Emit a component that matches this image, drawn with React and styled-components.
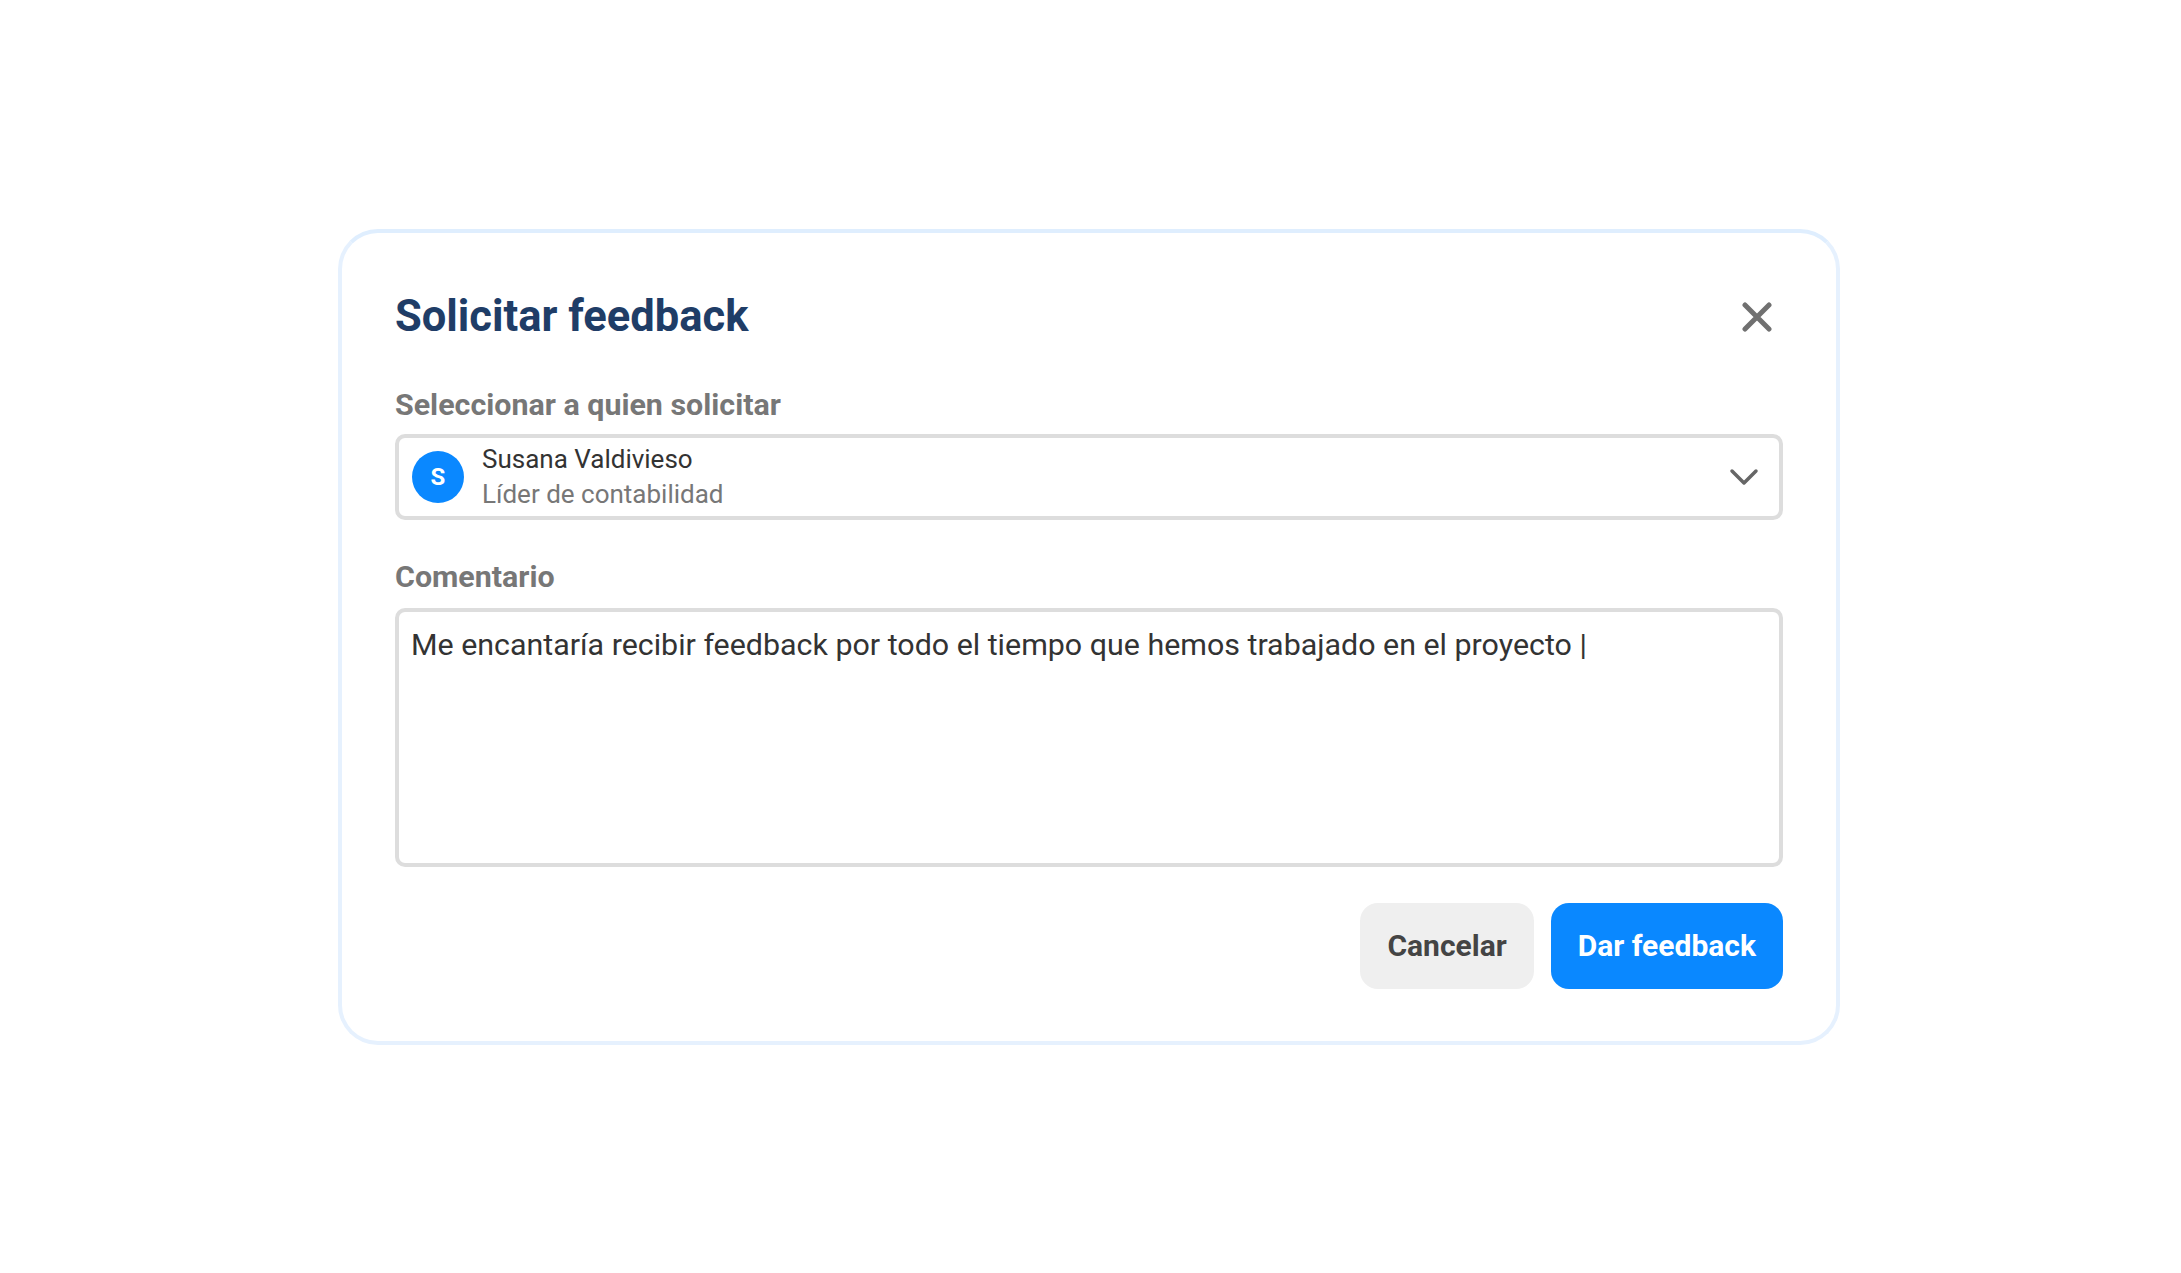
import React from 'react'
import styled, { createGlobalStyle } from 'styled-components'

const GlobalStyle = createGlobalStyle`
  html, body {
    margin: 0;
    padding: 0;
    background: #ffffff;
    font-family: Roboto, 'Liberation Sans', sans-serif;
  }
  * {
    box-sizing: border-box;
  }
`

const Page = styled.div`
  width: 100%;
  height: 100vh;
  display: flex;
  justify-content: center;
  align-items: center;
  padding-right: 3px;
`

const Modal = styled.div`
  width: 1502px;
  background: #ffffff;
  border: 4px solid #e6f1fe;
  border-top-color: #dfeefe;
  border-radius: 40px;
  padding: 58px 53px 52px 53px;
  display: flex;
  flex-direction: column;
`

const Header = styled.div`
  display: flex;
  flex-direction: row;
  justify-content: space-between;
  align-items: center;
  margin-bottom: 45px;
`

const Title = styled.h1`
  margin: 0;
  font-size: 43.5px;
  line-height: 50px;
  font-weight: 700;
  color: #1f3d67;
`

const CloseButton = styled.button`
  width: 52px;
  height: 52px;
  border: none;
  background: transparent;
  padding: 0;
  display: flex;
  justify-content: center;
  align-items: center;
  cursor: pointer;
`

const Label = styled.label`
  display: block;
  font-size: 30.4px;
  line-height: 34px;
  font-weight: 700;
  color: #777777;
  margin-bottom: ${({ gap }) => gap || 12}px;
`

const Field = styled.div`
  margin-bottom: ${({ space }) => space || 0}px;
`

const Select = styled.div`
  height: 86px;
  border: 4px solid #dddddd;
  border-radius: 10px;
  display: flex;
  flex-direction: row;
  align-items: center;
  padding: 0 20px 0 13px;
  cursor: pointer;
`

const Avatar = styled.div`
  width: 52px;
  height: 52px;
  border-radius: 50%;
  background: #0a88ff;
  color: #ffffff;
  font-size: 24px;
  font-weight: 700;
  display: flex;
  justify-content: center;
  align-items: center;
  flex-shrink: 0;
`

const Person = styled.div`
  flex: 1;
  display: flex;
  flex-direction: column;
  margin-left: 18px;
`

const PersonLine = styled.span`
  font-size: 26px;
  line-height: 35px;
  color: ${({ muted }) => (muted ? '#777777' : '#333333')};
`

const CommentBox = styled.textarea`
  display: block;
  width: 100%;
  height: 259px;
  border: 4px solid #dddddd;
  border-radius: 10px;
  padding: 15px 12px;
  font-family: Roboto, 'Liberation Sans', sans-serif;
  font-size: 30.4px;
  line-height: 36px;
  color: #333333;
  resize: none;
  outline: none;
`

const Actions = styled.div`
  display: flex;
  flex-direction: row;
  justify-content: flex-end;
  gap: 17px;
  margin-top: 36px;
`

const ActionButton = styled.button`
  height: 86px;
  padding: 0 27px;
  border: none;
  border-radius: 18px;
  font-family: Roboto, 'Liberation Sans', sans-serif;
  font-size: 30px;
  font-weight: 700;
  cursor: pointer;
  background: ${({ primary }) => (primary ? '#0a88ff' : '#efefef')};
  color: ${({ primary }) => (primary ? '#ffffff' : '#444444')};
`

const CloseIcon = () => (
  <svg width="30" height="30" viewBox="0 0 30 30">
    <path d="M3 3 L27 27 M27 3 L3 27" stroke="#707070" strokeWidth="5" strokeLinecap="round" fill="none" />
  </svg>
)

const ChevronIcon = () => (
  <svg width="30" height="18" viewBox="0 0 30 18">
    <path d="M3 3 L15 15 L27 3" stroke="#666666" strokeWidth="3.5" strokeLinecap="round" strokeLinejoin="round" fill="none" />
  </svg>
)

const App = () => {
  return (
    <>
      <GlobalStyle />
      <Page>
        <Modal>
          <Header>
            <Title>Solicitar feedback</Title>
            <CloseButton aria-label="Cerrar">
              <CloseIcon />
            </CloseButton>
          </Header>

          <Field space={40}>
            <Label>Seleccionar a quien solicitar</Label>
            <Select>
              <Avatar>S</Avatar>
              <Person>
                <PersonLine>Susana Valdivieso</PersonLine>
                <PersonLine muted>Líder de contabilidad</PersonLine>
              </Person>
              <ChevronIcon />
            </Select>
          </Field>

          <Field>
            <Label gap={14}>Comentario</Label>
            <CommentBox
              defaultValue="Me encantaría recibir feedback por todo el tiempo que hemos trabajado en el proyecto |"
            />
          </Field>

          <Actions>
            <ActionButton>Cancelar</ActionButton>
            <ActionButton primary>Dar feedback</ActionButton>
          </Actions>
        </Modal>
      </Page>
    </>
  )
}

export default App
